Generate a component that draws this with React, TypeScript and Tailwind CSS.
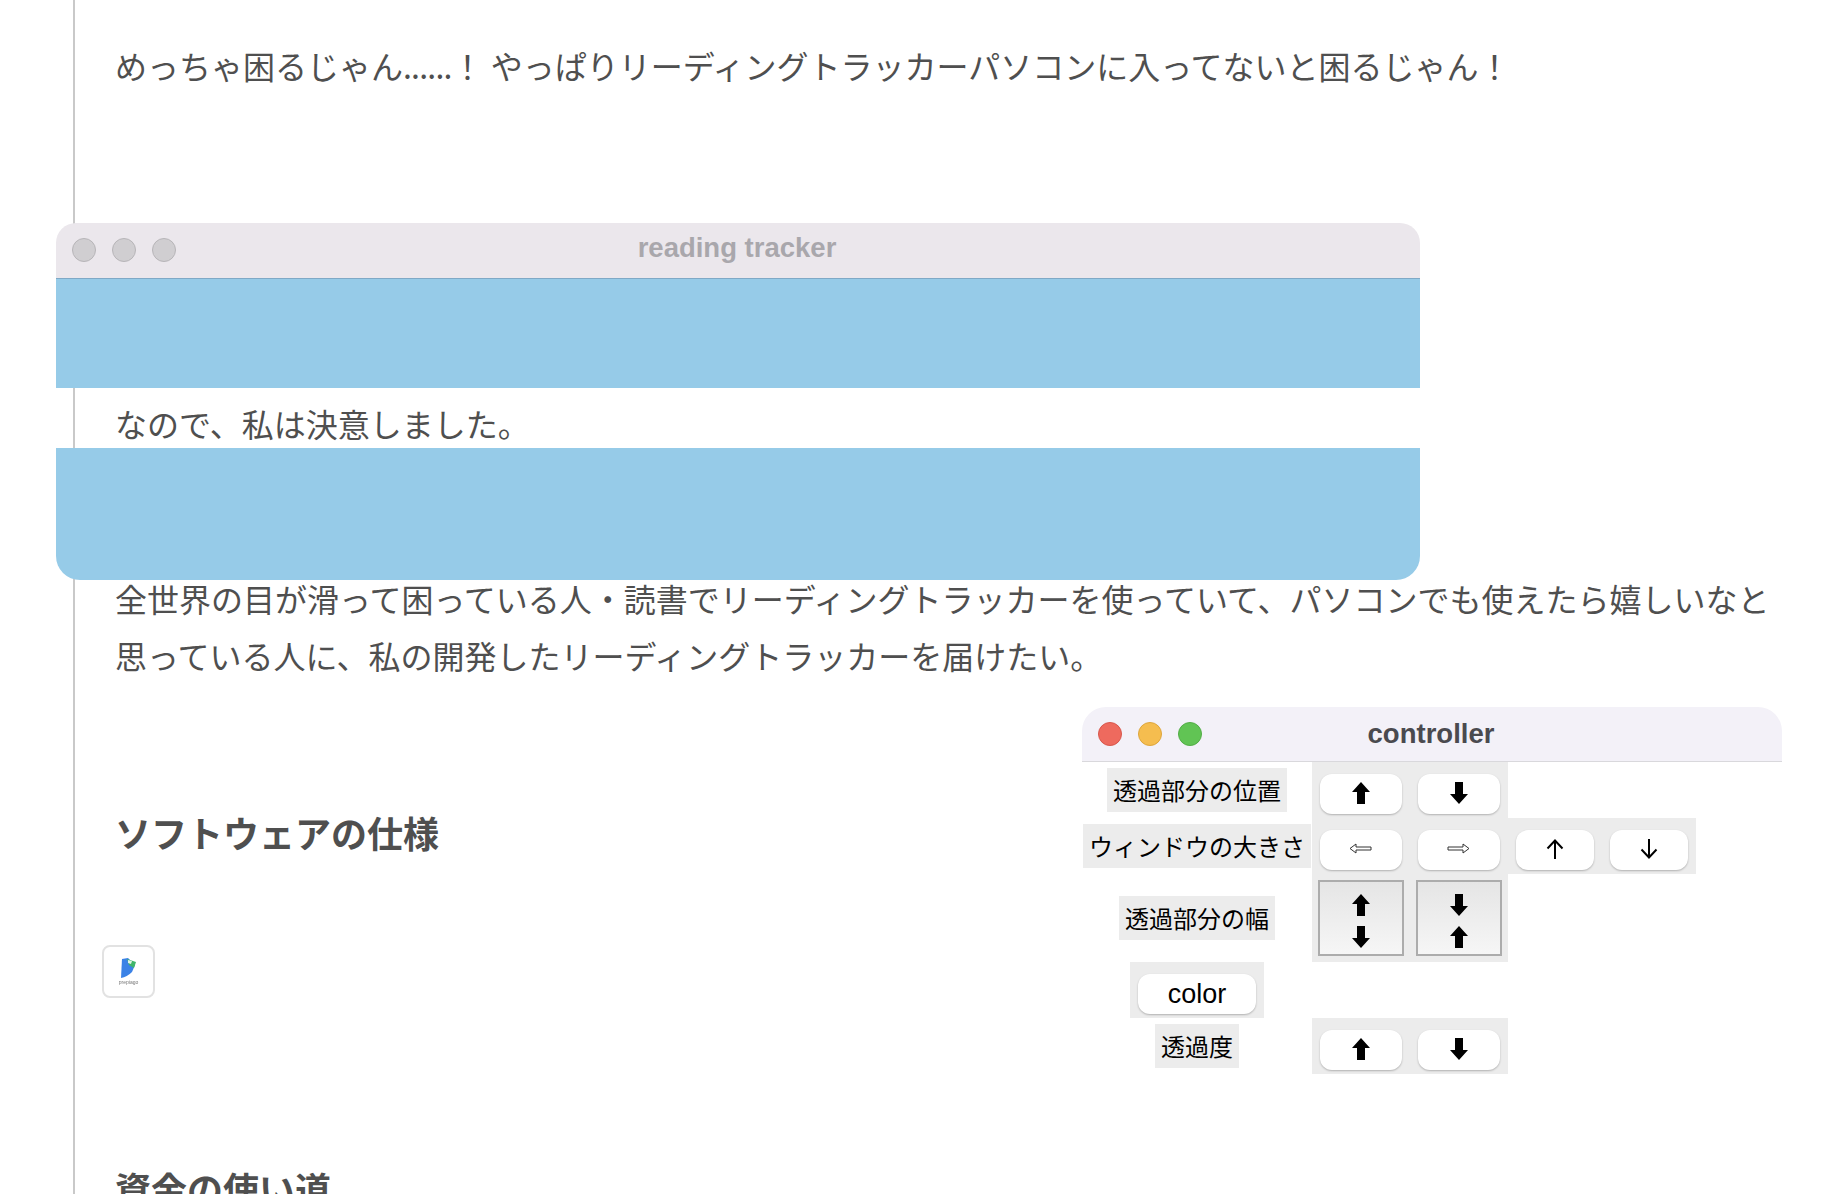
import React from 'react';

const jp = "font-['Noto_Sans_CJK_JP','Liberation_Sans',sans-serif]";

function ThickArrow({ down = false }: { down?: boolean }) {
  return (
    <svg width="18" height="22" viewBox="0 0 18 22" className={down ? 'rotate-180' : ''}>
      <path d="M9 0 L18 10 L13 10 L13 22 L5 22 L5 10 L0 10 Z" fill="#000" />
    </svg>
  );
}

function ThinArrow({ down = false }: { down?: boolean }) {
  return (
    <svg width="18" height="20" viewBox="0 0 18 20" className={down ? 'rotate-180' : ''}>
      <path d="M9 20 L9 2 M1.5 9.5 L9 1.5 L16.5 9.5" fill="none" stroke="#000" strokeWidth="2" />
    </svg>
  );
}

function HollowArrow({ right = false }: { right?: boolean }) {
  return (
    <svg width="23" height="11" viewBox="0 0 23 11" className={right ? 'rotate-180' : ''}>
      <path d="M1 5.5 L7 1 L7 4 L22 4 L22 7 L7 7 L7 10 Z" fill="#fff" stroke="#333" strokeWidth="1" />
    </svg>
  );
}

function Btn({ children, wide = true }: { children: React.ReactNode; wide?: boolean }) {
  return (
    <div className={`${wide ? 'w-[82px]' : 'w-[78px]'} h-[40px] pb-[3px] pr-[1px] rounded-[12px] bg-white shadow-[0_1px_2px_rgba(0,0,0,0.25)] flex items-center justify-center`}>
      {children}
    </div>
  );
}

function Pressed({ children }: { children: React.ReactNode }) {
  return (
    <div className="w-[86px] h-[76px] pt-[6px] pr-[1px] border-2 border-[#acacac] bg-gradient-to-b from-[#e5e5e5] to-[#f6f6f6] flex flex-col items-center justify-center gap-[10px]">
      {children}
    </div>
  );
}

function Label({ children }: { children: React.ReactNode }) {
  return (
    <div className="self-center justify-self-center h-[44px] px-[6px] bg-[#ececec] flex items-center text-[24px] text-black whitespace-nowrap">
      {children}
    </div>
  );
}

function Group({ children, className = '' }: { children: React.ReactNode; className?: string }) {
  return <div className={`w-fit bg-[#ececec] flex ${className}`}>{children}</div>;
}

function TrackerWindow() {
  return (
    <div className="absolute left-[56px] top-[223px] w-[1364px] flex flex-col">
      <div className="relative h-[56px] pb-[1px] rounded-t-[20px] bg-[#ebe7ec] border-b border-[#7fa9c6] flex items-center pl-[16px] gap-[16px]">
        <span className="w-[24px] h-[24px] rounded-full bg-[#d0ced1] border border-[#b7b5b8]" />
        <span className="w-[24px] h-[24px] rounded-full bg-[#d0ced1] border border-[#b7b5b8]" />
        <span className="w-[24px] h-[24px] rounded-full bg-[#d0ced1] border border-[#b7b5b8]" />
        <span className="absolute inset-x-0 top-[9px] pr-[2px] leading-[32px] text-center text-[27.5px] font-bold text-[#a9a7ac] font-['Liberation_Sans',sans-serif]">reading tracker</span>
      </div>
      <div className="h-[109px] bg-[#96cbe8]" />
      <div className="h-[60px]" />
      <div className="h-[132px] bg-[#96cbe8] rounded-b-[24px]" />
    </div>
  );
}

function ControllerWindow() {
  return (
    <div className={`absolute left-[1082px] top-[707px] w-[700px] bg-white ${jp}`}>
      <div className="relative h-[55px] rounded-t-[24px] bg-[#f3f1f8] border-b border-[#d9d8dc] flex items-center pl-[16px] gap-[16px]">
        <span className="w-[24px] h-[24px] rounded-full bg-[#ee6a5e] border border-[#d8574c]" />
        <span className="w-[24px] h-[24px] rounded-full bg-[#f5bd4f] border border-[#dea63c]" />
        <span className="w-[24px] h-[24px] rounded-full bg-[#61c454] border border-[#52ad46]" />
        <span className="absolute inset-x-0 text-center pr-[2px] text-[27.5px] font-bold text-[#4a4a4f] font-['Liberation_Sans',sans-serif]">controller</span>
      </div>
      <div className="grid grid-cols-[230px_1fr]">
        <Label>透過部分の位置</Label>
        <Group className="gap-[16px] px-[8px] pt-[12px] pb-[4px]">
          <Btn><ThickArrow /></Btn>
          <Btn><ThickArrow down /></Btn>
        </Group>

        <Label>ウィンドウの大きさ</Label>
        <Group className="gap-[16px] px-[8px] pt-[12px] pb-[4px]">
          <Btn><HollowArrow /></Btn>
          <Btn><HollowArrow right /></Btn>
          <Btn wide={false}><ThinArrow /></Btn>
          <Btn wide={false}><ThinArrow down /></Btn>
        </Group>

        <Label>透過部分の幅</Label>
        <Group className="gap-[12px] px-[6px] py-[6px]">
          <Pressed><ThickArrow /><ThickArrow down /></Pressed>
          <Pressed><ThickArrow down /><ThickArrow /></Pressed>
        </Group>

        <div className="justify-self-center w-[134px] h-[56px] bg-[#ececec] pt-[12px] px-[8px]">
          <div className="h-[40px] rounded-[12px] bg-white shadow-[0_1px_2px_rgba(0,0,0,0.25)] flex items-center justify-center text-[27px] text-black font-['Liberation_Sans',sans-serif]">color</div>
        </div>
        <div />

        <Label>透過度</Label>
        <Group className="gap-[16px] px-[8px] pt-[12px] pb-[4px]">
          <Btn><ThickArrow /></Btn>
          <Btn><ThickArrow down /></Btn>
        </Group>
      </div>
    </div>
  );
}

function LogoTile() {
  return (
    <div className="w-[53px] h-[53px] -ml-[13px] rounded-[8px] border-2 border-[#e2e2e2] bg-white flex flex-col items-center justify-center">
      <svg width="20" height="22" viewBox="0 0 20 22" className="blur-[0.6px]">
        <path d="M3 2 L9 1 L16 8 L13 15 Q8 20 2 21 Z" fill="#3b82e6" />
        <path d="M8 2 L17 5 L15 11 L10 8 Z" fill="#3fb56a" />
        <path d="M9 3 L13 4 L12 7 L9 6 Z" fill="#dff3e4" />
      </svg>
      <span className="text-[5px] leading-[7px] text-[#777] blur-[0.3px] font-['Liberation_Sans',sans-serif]">prepiago</span>
    </div>
  );
}

export default function App() {
  return (
    <div className={`relative w-full h-[1194px] overflow-hidden bg-white ${jp}`}>
      <div className="ml-[73px] h-full border-l-2 border-[#c9c9c9] pl-[40px] pr-[40px] text-[#4f4f4f] text-[32px] leading-[57px]">
        <p className="pt-[37px] whitespace-nowrap">めっちゃ困るじゃん<span className="tracking-[-0.8px]">......</span>！ やっぱりリーディングトラッカーパソコンに入ってないと困るじゃん！</p>
        <p className="mt-[301px]">なので、私は決意しました。</p>
        <p className="mt-[118px]">全世界の目が滑って困っている人・読書でリーディングトラッカーを使っていて、パソコンでも使えたら嬉しいなと思っている人に、私の開発したリーディングトラッカーを届けたい。</p>
        <h2 className="mt-[121px] text-[36px] font-bold leading-[54px]">ソフトウェアの仕様</h2>
        <div className="mt-[86px]"><LogoTile /></div>
        <h2 className="mt-[163px] text-[36px] font-bold leading-[54px]">資金の使い道</h2>
      </div>
      <TrackerWindow />
      <ControllerWindow />
    </div>
  );
}
